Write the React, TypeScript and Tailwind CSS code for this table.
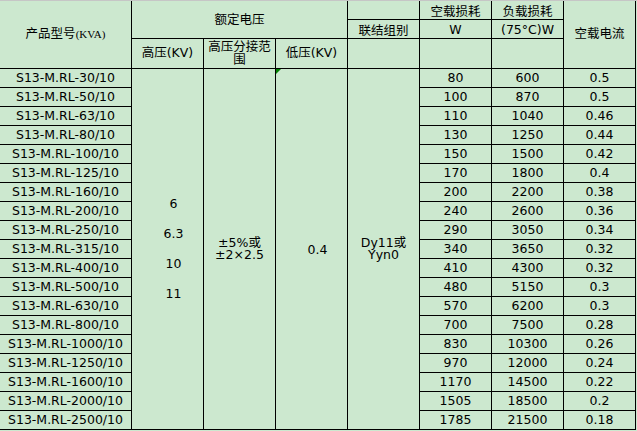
const rows: [string, string, string, string][] = [
  ['S13-M.RL-30/10', '80', '600', '0.5'],
  ['S13-M.RL-50/10', '100', '870', '0.5'],
  ['S13-M.RL-63/10', '110', '1040', '0.46'],
  ['S13-M.RL-80/10', '130', '1250', '0.44'],
  ['S13-M.RL-100/10', '150', '1500', '0.42'],
  ['S13-M.RL-125/10', '170', '1800', '0.4'],
  ['S13-M.RL-160/10', '200', '2200', '0.38'],
  ['S13-M.RL-200/10', '240', '2600', '0.36'],
  ['S13-M.RL-250/10', '290', '3050', '0.34'],
  ['S13-M.RL-315/10', '340', '3650', '0.32'],
  ['S13-M.RL-400/10', '410', '4300', '0.32'],
  ['S13-M.RL-500/10', '480', '5150', '0.3'],
  ['S13-M.RL-630/10', '570', '6200', '0.3'],
  ['S13-M.RL-800/10', '700', '7500', '0.28'],
  ['S13-M.RL-1000/10', '830', '10300', '0.26'],
  ['S13-M.RL-1250/10', '970', '12000', '0.24'],
  ['S13-M.RL-1600/10', '1170', '14500', '0.22'],
  ['S13-M.RL-2000/10', '1505', '18500', '0.2'],
  ['S13-M.RL-2500/10', '1785', '21500', '0.18'],
];

const cell = 'flex items-center justify-center bg-[#cce8cf] text-center leading-none';

export default function App() {
  return (
    <div
      className="h-[431px] w-[637px] overflow-hidden bg-[#cce8cf] text-[12.5px] text-black"
      style={{ fontFamily: '"DejaVu Sans", "Noto Sans CJK SC", sans-serif' }}
    >
      <div className="border-t border-[#c6c6c6]">
        <div className="grid w-[636px] grid-cols-[131px_repeat(7,71px)] grid-rows-[18px_18px_29px_repeat(19,18px)] gap-px bg-black pr-px pb-px">
          {/* header */}
          <div className={`${cell} col-start-1 row-span-3 row-start-1`}>
            <span>
              产品型号
              <span className="text-[11px]" style={{ fontFamily: '"Liberation Serif", serif' }}>
                (KVA)
              </span>
            </span>
          </div>
          <div className={`${cell} col-span-3 col-start-2 row-span-2 row-start-1 pt-[2px]`}>额定电压</div>
          <div className={`${cell} col-start-5 row-start-1`}></div>
          <div className={`${cell} col-start-6 row-start-1 pt-[4px]`}>空载损耗</div>
          <div className={`${cell} col-start-7 row-start-1 pt-[4px]`}>负载损耗</div>
          <div className={`${cell} col-start-8 row-span-3 row-start-1`}>空载电流</div>

          <div className={`${cell} col-start-5 row-start-2 pt-[4px]`}>联结组别</div>
          <div className={`${cell} col-start-6 row-start-2 pt-[3px]`}>W</div>
          <div className={`${cell} col-start-7 row-start-2 pt-[2px]`}>(75°C)W</div>

          <div className={`${cell} col-start-2 row-start-3`}>高压(KV)</div>
          <div className={`${cell} col-start-3 row-start-3 px-1 leading-[14px]`}>高压分接范围</div>
          <div className={`${cell} col-start-4 row-start-3`}>低压(KV)</div>
          <div className={`${cell} col-start-5 row-start-3`}></div>
          <div className={`${cell} col-start-6 row-start-3`}></div>
          <div className={`${cell} col-start-7 row-start-3`}></div>

          {/* merged voltage columns */}
          <div className={`${cell} col-start-2 row-span-19 row-start-4 flex-col pl-[12px]`}>
            {['6', '6.3', '10', '11'].map((v) => (
              <div key={v} className="leading-[30px]">
                {v}
              </div>
            ))}
          </div>
          <div className={`${cell} col-start-3 row-span-19 row-start-4 flex-col leading-[15px]`}>
            <div>±5%或</div>
            <div>±2×2.5</div>
          </div>
          <div className={`${cell} relative col-start-4 row-span-19 row-start-4 pl-[12px] pt-[2px]`}>
            <span className="absolute top-0 left-0 h-0 w-0 border-t-[5px] border-r-[5px] border-t-[#008000] border-r-transparent" />
            0.4
          </div>
          <div className={`${cell} col-start-5 row-span-19 row-start-4 flex-col leading-[15px]`}>
            <div>Dy11或</div>
            <div>Yyn0</div>
          </div>

          {/* data rows */}
          {rows.map(([model, noLoad, load, current], i) => (
            <div key={model} className="contents">
              <div className={`${cell} col-start-1`} style={{ gridRowStart: i + 4 }}>
                {model}
              </div>
              <div className={`${cell} col-start-6`} style={{ gridRowStart: i + 4 }}>
                {noLoad}
              </div>
              <div className={`${cell} col-start-7`} style={{ gridRowStart: i + 4 }}>
                {load}
              </div>
              <div className={`${cell} col-start-8`} style={{ gridRowStart: i + 4 }}>
                {current}
              </div>
            </div>
          ))}
        </div>
      </div>
    </div>
  );
}
